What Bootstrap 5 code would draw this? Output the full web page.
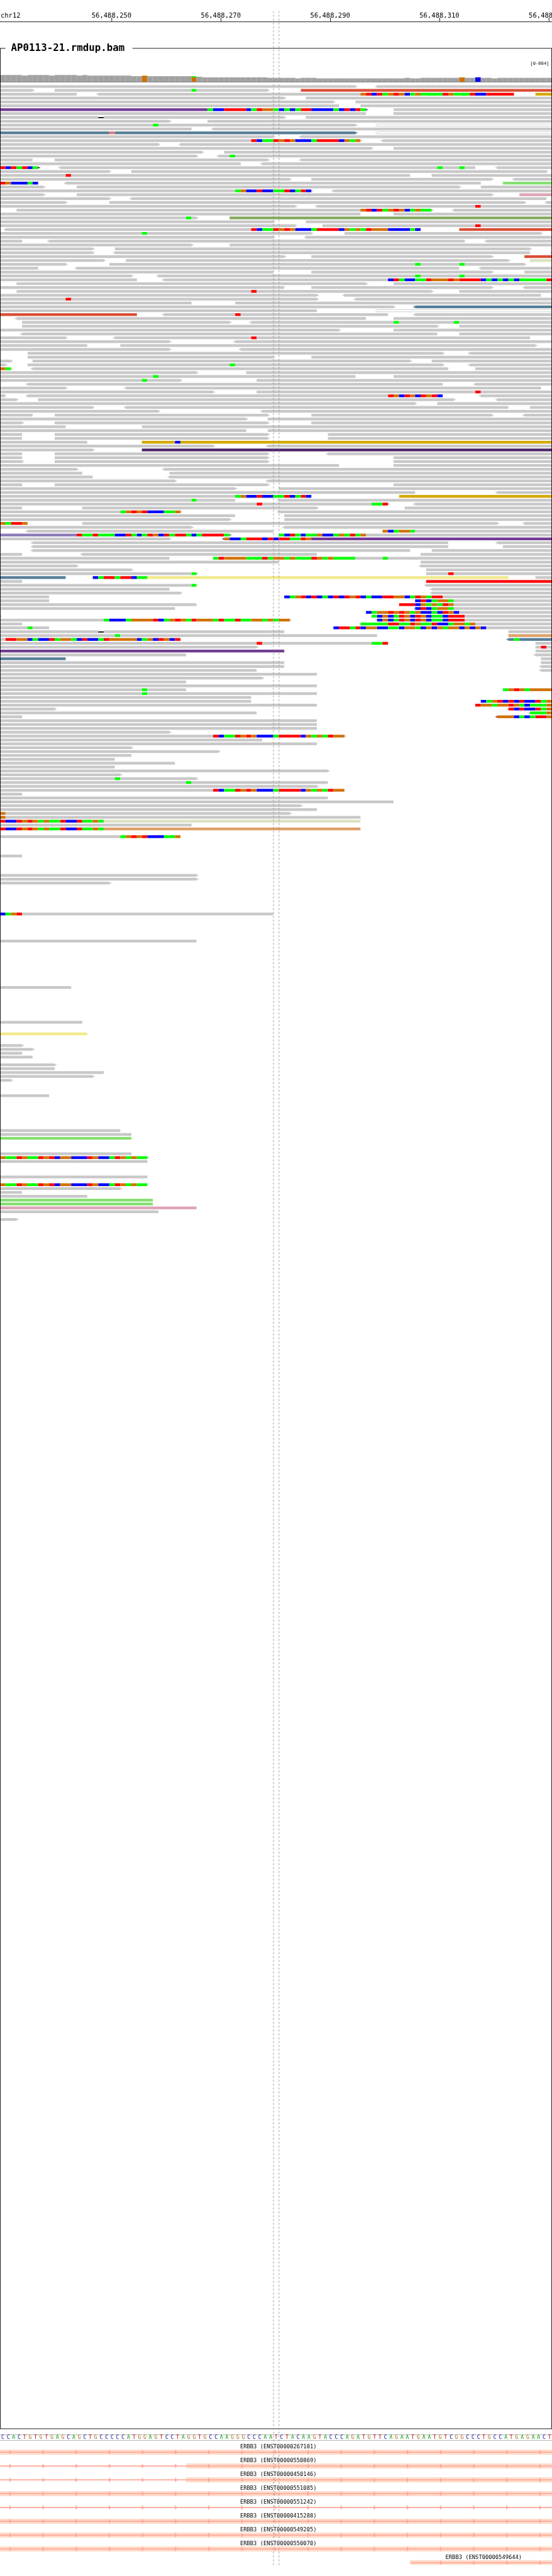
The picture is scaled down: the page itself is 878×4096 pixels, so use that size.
<!DOCTYPE html>
<html lang="en">
<head>
<meta charset="utf-8">
<meta name="viewport" content="width=device-width, initial-scale=1">
<title>AP0113-21.rmdup.bam</title>
<link href="https://cdn.jsdelivr.net/npm/bootstrap@5.3.0/dist/css/bootstrap.min.css" rel="stylesheet">
<style>
  html, body { background: #fff; overflow: hidden; }
  body { font-family: "DejaVu Sans Mono", monospace; color: #000; height: 4096px; }
  .viewport-fit { width: 878px; height: 4096px; }
  .browser-page { width: 1000px; height: 4663px; transform: scale(.878, .8784); transform-origin: 0 0; }
  .axis { height: 40px; border-bottom: 1px solid #000; }
  .axis-label { top: 21px; font-size: 12px; line-height: 14px; white-space: nowrap; }
  .axis-tick { bottom: 0; width: 1px; height: 7px; background: #000; }
  .bam-track { margin-top: 47px; height: 4310px; }
  .bam-track::after { content: ""; position: absolute; inset: 0; border: 1px solid #000; z-index: 1; }
  .bam-title { margin: -11px 0 0 10px; padding: 0 11px 0 10px; width: 230px; background: #fff; z-index: 2; font-size: 18px; font-weight: 700; line-height: 20px; white-space: nowrap; }
  .depth-range { margin-top: 13px; padding-right: 5px; font-size: 8.2px; line-height: 10px; }
  .coverage { margin-top: 17px; height: 13px; border-bottom: 1px solid #777; }
  .cov-bar { background: #a1a1a1; border-top: 1px solid #ababab; border-right: 1px solid #b2b2b2; }
  .cov-snp { border: 0; }
  .reads { margin-top: 5px; overflow: hidden; }
  .read-row { height: 7px; }
  .aligned { height: 5px; color: #c8c8c8; flex: none; }
  .aligned > i { background: currentColor; flex: none; height: 5px; }
  .aligned.hollow > i { background: #fff; border: solid #c8c8c8; border-width: 1px 0; }
  .aligned > i.gap-del { background: linear-gradient(#000, #000) 0 2px / 100% 2px no-repeat; }
  .tip-r::after, .tip-l::before { content: ""; position: absolute; top: 1px; width: 4px; height: 3px; }
  .tip-r::after { left: 100%; background: linear-gradient(currentColor, currentColor) 0 0 / 2px 3px no-repeat, linear-gradient(currentColor, currentColor) 0 1px / 4px 1px no-repeat; }
  .tip-l::before { right: 100%; background: linear-gradient(currentColor, currentColor) 100% 0 / 2px 3px no-repeat, linear-gradient(currentColor, currentColor) 0 1px / 4px 1px no-repeat; }
  .hollow.tip-l::before { background: linear-gradient(#c8c8c8, #c8c8c8) 100% 0 / 2px 1px no-repeat, linear-gradient(#c8c8c8, #c8c8c8) 100% 100% / 2px 1px no-repeat, linear-gradient(#c8c8c8, #c8c8c8) 1px 1px / 1px 1px no-repeat; }
  .sequence { margin-top: 10px; height: 11px; border: solid #aaa; border-width: 1px 0; font-size: 9px; line-height: 9px; }
  .nt-A { color: #009600; } .nt-C { color: #000096; } .nt-G { color: #a8640c; } .nt-T { color: #aa0000; }
  .genes { padding-top: 1px; }
  .gene { height: 25px; padding-top: 5px; }
  .gene-name { width: 138px; font-size: 10px; line-height: 10px; margin-left: 435px; white-space: nowrap; }
  .gene-line { height: 10px; overflow: hidden; background: linear-gradient(#ffa898, #ffa898) 0 4px / 100% 2px no-repeat; }
  .exon { background: linear-gradient(#ffa898, #ffa898) 0 4px / 100% 2px no-repeat #ffdccc; }
  .gene-line svg { display: block; width: 1000px; height: 10px; }
  .gene-line.late { height: 9px; }
  .guides { top: 20px; left: 490px; width: 20px; height: 4623px; z-index: 5; }
</style>
</head>
<body>
<div class="viewport-fit overflow-hidden">
<main class="browser-page position-relative">
  <header class="axis position-relative" id="axis"><span class="axis-label position-absolute" style="left:1px">chr12</span></header>
  <section class="bam-track position-relative d-flex flex-column">
    <h1 class="bam-title position-relative">AP0113-21.rmdup.bam</h1>
    <div class="depth-range text-end">[0-604]</div>
    <div class="coverage d-flex align-items-end" id="coverage"></div>
    <div class="reads" id="reads"></div>
  </section>
  <div class="sequence d-flex" id="sequence"></div>
  <section class="genes" id="genes"></section>
  <svg class="guides position-absolute" viewBox="0 0 20 4623" stroke="#8a8a8a" stroke-width="1.1" stroke-dasharray="3 4">
    <path d="M5.5 0V4623M15.5 0V4623"/>
  </svg>
</main>
</div>

<script type="text/plain" id="alignments">
0-65> <69-101
0-6> 10-49> r55-101 @35:G
0-14 <18-94 y98-101 @66:ORBRGOROBGOGGGGROGGGRBBRRRRR
0-52> 56-101
0-61> 65-101
0-62 66-101
p0-67> 72-101 @38:GBBRRRRBGROOGBGBGRRBBBBGBRBRG
0-67 72-101
0-52> 56-101 @18:X
0-31> 38-101
0-65> w<69-101 @28:G
0-35 <39-101
s0-65> w<69-101 @20:P
0-50> <55-101
0-66> <70-101 @46:RBGGROROBBBGRRRRBOGO
0-29> <33-101
0-68> 72-101
0-37> 41-101
0-36> <40-101 @42:G
0-6 10-49> <55-101
0-44 <48-101
d0-7> <11-87 <91-101 @0:RBRGRBG @80:G @84:G
0-20> 24-100>
0-75 79-101 @12:R
0-53> 57-90> <94-101
0-7 <12-88 g92-101 @0:ROBBBGB
0-8> 14-84> 88-101
0-57> <61-101 @43:GOBBRBBGGRBGRB
0-8> 14-90> k95-101
0-20> <24-100
0-12> 20-96> <100-101
0-54> <58-101 @87:R
3-79> <83-101 @66:ORBRGOROBGOGG
0-66 72-101
0-36> o42-101 @34:G
0-50> 56-101
0-54> 59-101 @87:R
<1-77 r84-101 @46:RBGGROROBBBGRRRRBOGOGROOOBBBBGB
0-57> 63-99> @26:G
0-50> <56-101
0-4 <9-85 <89-101
0-35> 42-101
0-17> 21-97>
0-17> <21-97 <101-101
0-52> 57-90> r96-101
0-19> 23-93> l97-101
0-12> 20-96> @76:G @84:G
0-7 <14-84 <88-101
0-50 57-90> 96-101
0-24> <29-101 @76:G @84:G
0-25 <30-101 @71:BRGBBGGROOOROrrrrBGBGBGBGGGGGR
3-67> 72-101
0-52 57-90> <96-101
3-79> 84-101 @46:R
0-58> <63-99
0-58> <65-101 @12:R
0-35 43-101
0-72> s<76-101
0-58 w<69-101
r0-25 <30-71 <76-101 @43:R
<3-67 72-101
4-42> <46-101 @72:G @83:G
4-80> 84-101
0-62> 72-101
<4-80 84-101
0-12> <21-97 @46:R
0-31> <43-101
0-16 22-98>
0-31> <44-101
5-81> <86-101
5-50> 57-101
0-2> 6-75> 79-101
0-1> 5-81> <86-101 @42:G
0-2> <6-82 87-101 @0:OG
0-36> 45-101
0-65 72-101 @28:G
0-33> 47-101 @26:G
<5-81 <87-101
0-12> <23-99
0-39> 47-101 @87:R
0-1 <5-81 <88-101 @71:ROBROBRORB
0-3> 7-83> <91-101
0-76> 80-101
0-17> <23-93 97-101
0-29> <48-101
0-6 10-49> 57-90> <96-101
0-45> 49-101
0-4> 10-49> 57-101
0-12 26-101
0-45 49-101
0-4 10-49> 60-101
0-4 10-49> 60-101
0-16 y26-101 @32:B
0-39> <49-101
0-17> d26-101
0-4 10-49> <60-101
0-4 10-49> 72-101
0-4> 10-49> 72-101
0-62 72-101
0-14> <30-101
0-15 31-101
0-17 <31-101
0-32> <49-101
0-4 10-49> 72-101
0-43> 51-101
0-76 <91-101
0-57 y73-101 @43:GOBBRBBGGRBGRB
0-43 <51-101 @35:G
0-71> <76-101 @47:R @68:GGR
0-4 15-58> 74-101
0-33> <51-101 @22:GORORBBBGGO
0-43 52-101
0-42> 52-101
0-5 15-91> <96-101 @0:OGRRO
0-35> <52-101
<5-50 70-101 @70:OBGOOG
v0-42> 51-101 @14:RGGRGGGBBRGBGROBRGRRGBGRRRRG @51:GBRGBGGOBBGOGRGO
0-31> p<41-101 @41:OBBGRRRBRBRRGGRO
<6-82 <91-101
<6-82 92-101
<6-75 79-101
0-4 <15-58 77-101
0-31 39-101 @39:GROOOOGGGRGOOGOGGGROGOGGGG @70:G
0-51 77-101
0-14> <77-101
0-24> 78-101
0-36> 78-101 @35:G @82:R
s0-12 h<17-93 98-101 @17:BGRRGRRBGG
0-4 R78-101
0-36 <78-101 @35:G
0-31 <79-101
0-33> <79-101
0-9 52-101 @52:BGORBRBGBRBRORBGBBRROOBGROGRR
0-9 76-101 @76:BRBGOOG
0-36 73-101 @73:RRRBOGOGRO
0-32 <76-101 @76:BRBGOOG
67-101 @67:BGOOROROGOBBGBROB
0-0> 68-101 @68:GBOBGROBROBGGBRRR
0-53> <69-101 @19:GBBBGOOOORBGOROGROOOGRGGRGGOOGOGOO @69:BOBGROBROBGGBRRR
0-4 66-101 @66:GGGGGRRGGROGGRBBGOOGO
0-9 61-101 @5:G @61:BRRGRBOOBBGGBOOGBOBOGOOBOBOB
0-52 93-101 @18:X
0-69 t93-101 @21:G
0-33 s<93-101 @1:RROOBGBBRGOOGBRBBGROOOOOBGOBROBR @94:G
0-71 98-101 @47:R @68:GGR
0-47> 98-101 @99:R
p0-52 98-101
0-34 <98-101
s0-12 99-101
0-52 99-101
0-52 <99-101
0-47 <99-101
0-58
0-48>
0-34
0-58
0-34 92-101 @26:G @92:GOROGOOOO
0-58 @26:G
0-46
0-46 88-101 @88:BGORBRBRBBRGO
0-58 87-101 @87:ROOGOOROGBGGGO
0-10> <93-101 @93:RBRBBRGO
0-47 <97-101 @97:GGGO
0-4 m<91-101 @91:OOOBGBGRRO
0-58
0-58
0-58
0-31>
0-63> @39:RBGGROROBBBGRRRRBOGOGROO
0-48
0-58
0-24>
0-40>
0-24
0-21
0-32
0-21
0-60>
0-22>
0-36> @21:G
0-60 @34:G
0-58>
0-63 @39:RBGGROROBBBGRRRRBOGOGROO
0-4
0-60
0-72
0-55>
0-58
0-53> @0:O
0-66 @0:O
l0-66 @0:RBBROROGOGGRBBRGGOG
0-35
t0-66 @0:RBBROROGOGGRBBRGGOG
=194 0-33 @22:GORORBBBGGO
=199 0-4
=204 0-36>
0-36>
0-20>
=214 0-50 @0:BGOR
=221 0-36
=233 0-13
=242 0-15
=245 h0-16
=248 0-4>
0-6>
0-4
0-6
=253 0-10>
0-10
0-19
0-17>
0-2>
=261 0-9
=270 0-22
0-24
g0-24
=276 0-24
0-27> @0:OGGROGGRORBOOBBBROBBGROGOGG
0-27
=282 0-27
=284 0-27 @0:OGGROGGRORBOOBBBROBBGROGOGG
0-22>
0-4
0-16
g0-28
g0-28
k0-36
0-29
=293 0-3>
</script>
<script>
  const BASES = 101, WIDTH = 1000;
  const px = n => Math.round(n * WIDTH / BASES);
  const el = (tag, cls, parent) => { const e = document.createElement(tag); e.className = cls; parent.appendChild(e); return e; };

  // Axis labels and ticks
  const axis = document.getElementById('axis');
  [[202, '56,488,250'], [400, '56,488,270'], [598, '56,488,290'], [796, '56,488,310'], [994, '56,488,330']].forEach(([x, t]) => {
    const l = el('span', 'axis-label position-absolute', axis);
    l.textContent = t; l.style.left = (x - 36) + 'px';
    el('span', 'axis-tick position-absolute', axis).style.left = x + 'px';
  });

  // Coverage histogram: [last base (exclusive), height]
  const cov = document.getElementById('coverage');
  const depth = [[4,12],[5,11],[9,12],[10,11],[14,12],[15,11],[16,12],[24,11],[26,10],[27,11],[35,10],[36,10],[37,9],[49,8],[54,7],[55,6],[58,7],[74,6],[75,7],[77,6],[84,7],[85,8],[87,7],[88,8],[90,7],[91,6],[101,7]];
  const snp = {
    26: 'linear-gradient(90deg,transparent 4px,#00ff00 4px 5px,transparent 5px) 0 0/100% 1px no-repeat #d17105',
    35: 'linear-gradient(#00ff00 2px,#d17105 2px)',
    84: 'linear-gradient(90deg,transparent 4px,#00ff00 4px 5px,transparent 5px) 0 0/100% 1px no-repeat #d17105',
    87: 'linear-gradient(90deg,transparent 4px,#ff0000 4px 5px,transparent 5px) 0 0/100% 1px no-repeat #0000ff'
  };
  for (let b = 0; b < BASES; b++) {
    const bar = el('div', 'cov-bar' + (snp[b] ? ' cov-snp' : ''), cov);
    bar.style.width = (px(b + 1) - px(b)) + 'px';
    bar.style.height = depth.find(d => b < d[0])[1] + 'px';
    if (snp[b]) bar.style.background = snp[b];
  }

  // Reads
  const readColor = { r:'#d94f36', y:'#d4a900', p:'#733b93', s:'#577f98', g:'#84df70', k:'#dca3b4', o:'#85a95f', l:'#d9e3c0', d:'#4c2468', v:'#8c7ab8', h:'#f1ea8a', R:'#ff0000', t:'#dda068', m:'#b02878' };
  const baseColor = { G:'#00ff00', B:'#0000ff', R:'#ff0000', r:'#ff0000', O:'#d17105', P:'#e07a78' };
  const reads = document.getElementById('reads');
  let rowCount = 0;
  document.getElementById('alignments').textContent.trim().split('\n').forEach(line => {
    let tokens = line.trim().split(' ');
    if (tokens[0][0] === '=') {
      const target = +tokens.shift().slice(1);
      while (rowCount < target) { el('div', 'read-row', reads); rowCount++; }
    }
    const row = el('div', 'read-row d-flex', reads); rowCount++;
    const mism = {};
    tokens.filter(t => t[0] === '@').forEach(t => {
      const [at, s] = t.slice(1).split(':');
      [...s].forEach((c, i) => mism[+at + i] = c);
    });
    let cursor = 0;
    tokens.filter(t => t[0] !== '@').forEach(t => {
      const m = t.match(/^([a-zA-Z]?)(<?)(\d+)-(\d+)(>?)$/), a = +m[3], z = +m[4];
      const seg = el('div', 'aligned d-flex position-relative' + (m[2] ? ' tip-l' : '') + (m[5] ? ' tip-r' : '') + (m[1] === 'w' ? ' hollow' : ''), row);
      if (readColor[m[1]]) seg.style.color = readColor[m[1]];
      seg.style.marginLeft = (px(a) - cursor) + 'px';
      for (let b = a; b < z;) {
        let e = b + 1;
        while (e < z && mism[e] === mism[b]) e++;
        const run = el('i', mism[b] === 'X' ? 'gap-del' : '', seg);
        run.style.width = (px(e) - px(b)) + 'px';
        if (baseColor[mism[b]]) run.style.background = baseColor[mism[b]];
        b = e;
      }
      cursor = px(z);
    });
  });

  // Reference sequence
  const seq = document.getElementById('sequence');
  [...'CCACTGTGTGAGCAGCTGCCCCCATGGAGTCCTAGGTGCCAAGGGCCCAATCTACAAGTACCCAGATGTTCAGAATGAATGTCGGCCCTGCCATGAGAACT'].forEach(c => {
    el('span', 'flex-fill text-center nt-' + c, seq).textContent = c;
  });

  // Transcripts: [id, exon start in bases or null]
  const genes = document.getElementById('genes');
  const arrows = from => {
    let s = '';
    for (let x = 17; x < WIDTH; x += 60) if (x > from) s += `<path d="M${x} 1h1v1h1v1h1v4h-1v1h-1v1h-1z"/>`;
    return `<svg viewBox="0 0 1000 10" fill="#ffa898">${s}</svg>`;
  };
  [['267101', 0], ['550869', 34], ['450146', 34], ['551085', 0], ['551242', null], ['415288', 0], ['549205', 0], ['550070', 0], ['549644', 75]].forEach(([id, start], i) => {
    const g = el('div', 'gene', genes), name = el('div', 'gene-name', g);
    name.textContent = `ERBB3 (ENST00000${id})`;
    const late = i === 8;
    if (late) name.style.marginLeft = '807px';
    const line = el('div', 'gene-line position-relative' + (late ? ' late' : ''), g);
    if (late) { line.style.background = 'none'; }
    line.innerHTML = arrows(late ? px(start) : 0);
    if (start !== null) {
      line.classList.add('d-flex');
      const svg = line.firstChild;
      const exon = el('div', 'exon flex-shrink-0', line);
      exon.style.width = (WIDTH - px(start)) + 'px';
      exon.style.marginLeft = px(start) + 'px';
      line.insertBefore(exon, svg);
      svg.classList.add('flex-shrink-0', 'position-relative');
      svg.style.marginLeft = -WIDTH + 'px';
    }
  });
</script>
<script src="https://cdn.jsdelivr.net/npm/bootstrap@5.3.0/dist/js/bootstrap.bundle.min.js"></script>
</body>
</html>
